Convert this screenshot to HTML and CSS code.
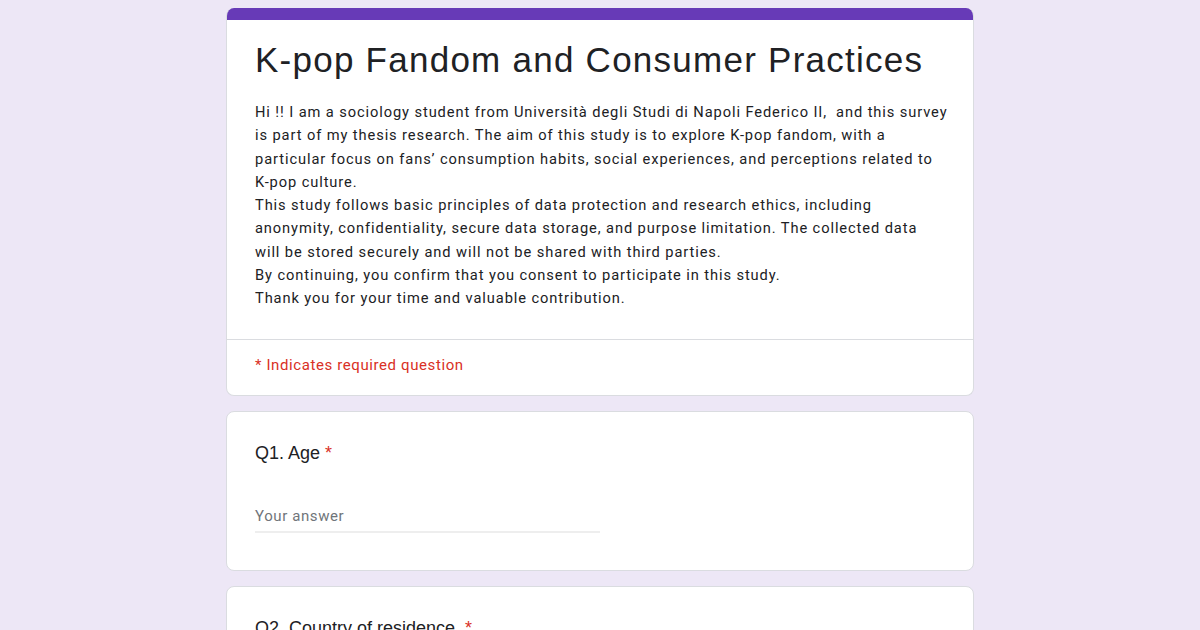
FILE: index.html
```html
<!DOCTYPE html>
<html>
<head>
<meta charset="utf-8">
<link rel="stylesheet" href="styles.css">
</head>
<body>
<div class="form">
  <div class="card header-card">
    <div class="accent"></div>
    <div class="header-main">
      <h1 class="title">K-pop Fandom and Consumer Practices</h1>
      <div class="desc">Hi !! I am a sociology student from Università degli Studi di Napoli Federico II,  and this survey
is part of my thesis research. The aim of this study is to explore K-pop fandom, with a
particular focus on fans’ consumption habits, social experiences, and perceptions related to
K-pop culture.
This study follows basic principles of data protection and research ethics, including
anonymity, confidentiality, secure data storage, and purpose limitation. The collected data
will be stored securely and will not be shared with third parties.
By continuing, you confirm that you consent to participate in this study.
Thank you for your time and valuable contribution.</div>
    </div>
    <div class="required-note">* Indicates required question</div>
  </div>

  <div class="card question">
    <div class="q-title">Q1. Age <span class="star">*</span></div>
    <div class="answer">Your answer</div>
  </div>

  <div class="card question">
    <div class="q-title">Q2. Country of residence &nbsp;<span class="star">*</span></div>
  </div>
</div>
</body>
</html>
```

FILE: styles.css
```css
html, body {
  margin: 0;
  padding: 0;
}
body {
  background: #ede7f6;
  font-family: Roboto, "Liberation Sans", Arial, sans-serif;
  color: #202124;
  height: 630px;
  overflow: hidden;
}
.form {
  width: 748px;
  margin: 8px auto 0;
  display: flex;
  flex-direction: column;
  gap: 15px;
}
.card {
  background: #fff;
  border: 1px solid #dadce0;
  border-radius: 8px;
  overflow: hidden;
}
.header-card {
  border-top: none;
}
.accent {
  height: 12px;
  background: #673ab7;
}
.header-main {
  padding: 18px 20px 28px 28px;
  border-bottom: 1px solid #dadce0;
}
.title {
  margin: 0;
  font-family: "Liberation Sans", Arial, sans-serif;
  font-weight: 400;
  font-size: 35px;
  letter-spacing: 1.25px;
  line-height: 44px;
  color: #202124;
}
.desc {
  margin-top: 19px;
  font-size: 14.67px;
  letter-spacing: 0.9px;
  line-height: 23.3px;
  white-space: pre;
  color: #202124;
}
.required-note {
  padding: 14px 28px 19px;
  font-size: 15px;
  letter-spacing: 0.6px;
  line-height: 22px;
  color: #d93025;
}
.question {
  padding: 28px 28px 37px;
}
.q-title {
  font-family: "Liberation Sans", Arial, sans-serif;
  font-size: 18px;
  line-height: 26px;
  color: #202124;
}
.star {
  color: #d93025;
}
.answer {
  margin-top: 39px;
  width: 345px;
  font-size: 15px;
  letter-spacing: 0.6px;
  line-height: 22px;
  color: #70757a;
  padding-bottom: 4px;
  border-bottom: 2px solid #eeeeee;
}
```
